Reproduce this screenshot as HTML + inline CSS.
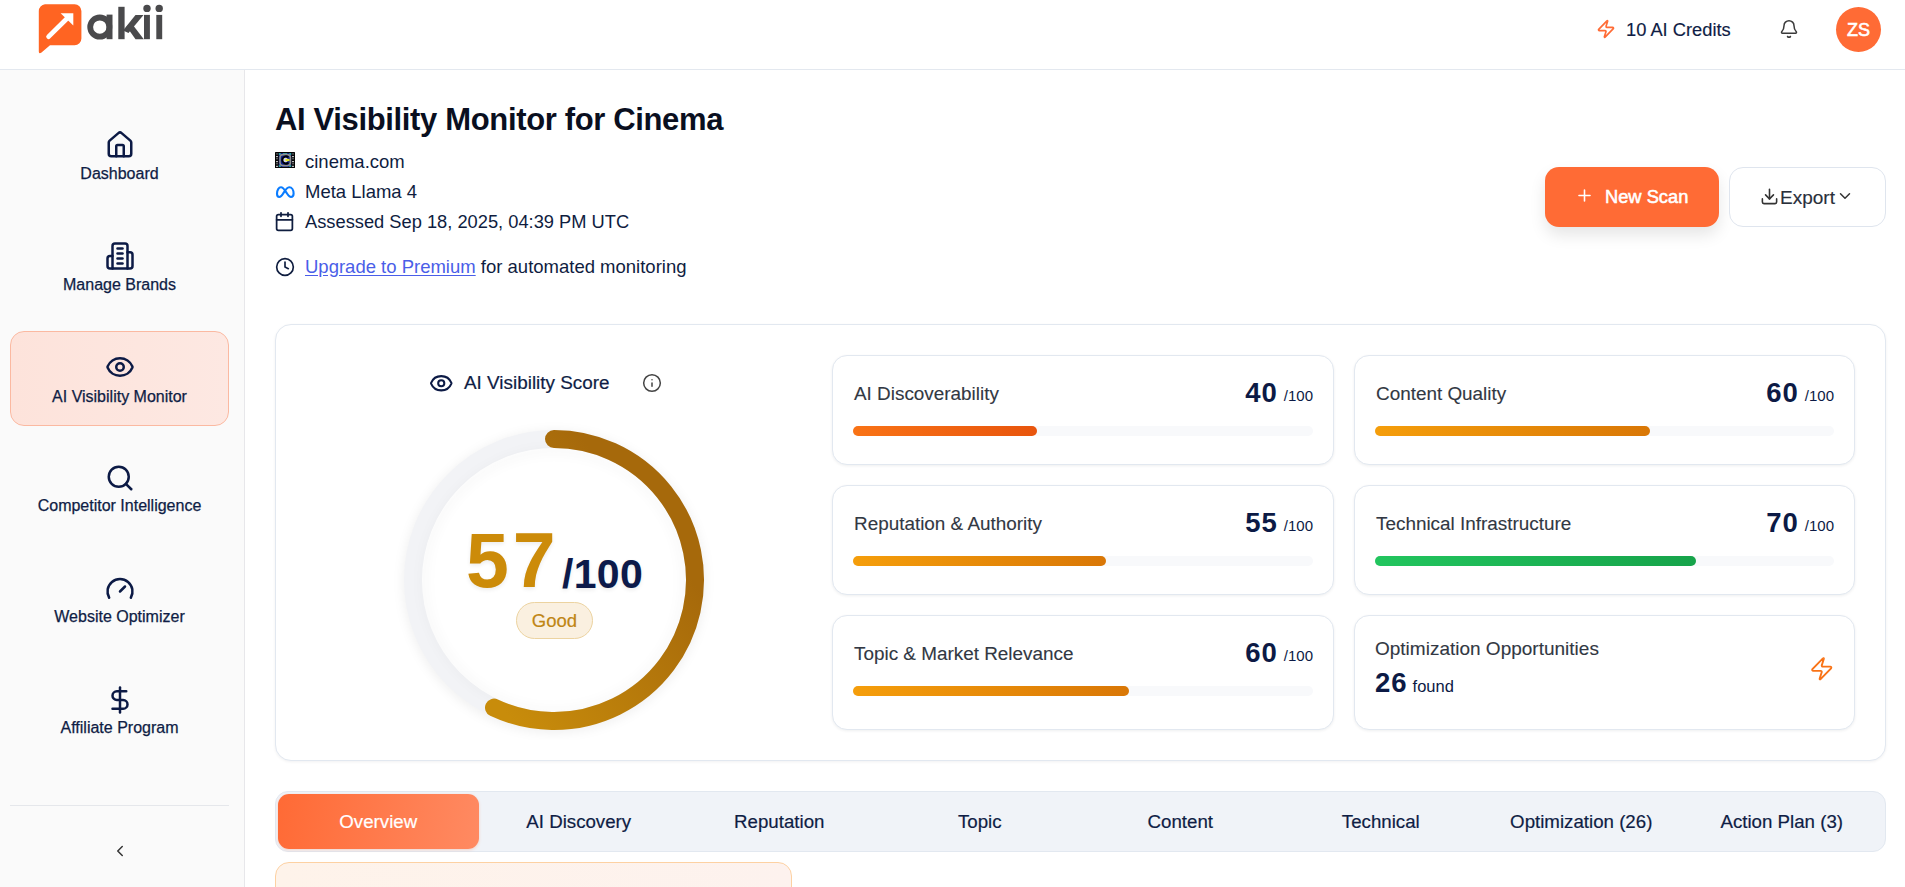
<!DOCTYPE html>
<html><head><meta charset="utf-8">
<style>
*{box-sizing:border-box;margin:0;padding:0}
html,body{width:1905px;height:887px;overflow:hidden;background:#fff;font-family:"Liberation Sans",sans-serif;color:#0f1d3f}
.abs{position:absolute}
#header{position:absolute;left:0;top:0;width:1905px;height:70px;background:#fff;border-bottom:1px solid #e3e8ef}
#sidebar{position:absolute;left:0;top:70px;width:245px;height:817px;background:#fafafa;border-right:1px solid #e7e7ea}
.nav{position:absolute;left:10px;width:219px;height:95px;text-align:center}
.nav svg{position:absolute;left:50%;transform:translateX(-50%)}
.nav .lbl{position:absolute;left:0;right:0;font-size:16px;color:#0f1d45;white-space:nowrap;-webkit-text-stroke:0.25px #0f1d45}
.nav.active{background:linear-gradient(90deg,#fde3db,#fde8e2);border:1px solid #fbb9a1;border-radius:14px}
.t{position:absolute;white-space:nowrap;line-height:1}
.card{position:absolute;background:#fff;border:1px solid #e2e8f0;border-radius:16px;box-shadow:0 1px 3px rgba(15,23,42,.06)}
.mc{position:absolute;background:#fff;border:1px solid #e2e8f0;border-radius:15px;box-shadow:0 1px 3px rgba(15,23,42,.07)}
.mlab{position:absolute;left:21px;font-size:18.9px;color:#323843;-webkit-text-stroke:0.12px #323843;white-space:nowrap;line-height:1}
.mnum{position:absolute;right:20px;white-space:nowrap;line-height:1;color:#0c1a45}
.mnum b{font-size:27.5px;font-weight:700;letter-spacing:1px}
.mnum span{font-size:15px;margin-left:6px;position:relative;top:-1px}
.track{position:absolute;left:20px;right:20px;height:10px;border-radius:5px;background:#f8f9fb}
.fill{position:absolute;left:0;top:0;height:10px;border-radius:5px}
.tab{position:absolute;top:0;height:55px;width:200.5px;text-align:center;font-size:18.7px;color:#0f1d45;line-height:55.5px;-webkit-text-stroke:0.2px currentColor}
</style></head>
<body>
<div id="header">
  <!-- logo -->
  <svg class="abs" style="left:37px;top:3px" width="46" height="52" viewBox="0 0 46 52">
    <path d="M8 1.2 H37.6 A6.8 6.8 0 0 1 44.4 8 V35.5 A6.8 6.8 0 0 1 37.6 42.3 H13 L4.5 49.5 Q1.8 51.5 1.8 48.5 V8 A6.8 6.8 0 0 1 8 1.2 Z" fill="#ff6422"/>
    <path d="M11.6 33.6 L30.5 15" stroke="#fff" stroke-width="4.8" stroke-linecap="round"/>
    <path d="M23.6 10.2 H36.3 V22.6 Z" fill="#fff"/>
  </svg>
  <svg class="abs" style="left:0;top:0" width="180" height="60" viewBox="0 0 180 60" fill="#4a4a4c">
    <circle cx="99.8" cy="27.1" r="9.6" fill="none" stroke="#4a4a4c" stroke-width="5.8"/>
    <rect x="106.6" y="14.6" width="5.9" height="24.6"/>
    <rect x="118.3" y="6.8" width="6.3" height="32.4"/>
    <path d="M123 30.5 L135.5 14.9 H143.5 L128.5 33 Z"/>
    <path d="M126.5 26.5 L131 22.5 L143.8 39.2 H135.5 Z"/>
    <rect x="144" y="14.9" width="5.9" height="24.3"/>
    <circle cx="147" cy="8.4" r="3.7"/>
    <rect x="156.3" y="14.9" width="5.9" height="24.3"/>
    <circle cx="159.2" cy="8.4" r="3.7"/>
  </svg>

  <svg class="abs" style="left:1596px;top:19px" width="20" height="20" viewBox="0 0 24 24" fill="none" stroke="#ff6b35" stroke-width="2" stroke-linejoin="round" stroke-linecap="round"><path d="M4 14a1 1 0 0 1-.78-1.63l9.9-10.2a.5.5 0 0 1 .86.46l-1.92 6.02A1 1 0 0 0 13 10h7a1 1 0 0 1 .78 1.63l-9.9 10.2a.5.5 0 0 1-.86-.46l1.92-6.02A1 1 0 0 0 11 14z"/></svg>
  <div class="t" style="left:1626px;top:21px;font-size:18.3px;color:#0f1d45;-webkit-text-stroke:0.15px #0f1d45">10 AI Credits</div>
  <svg class="abs" style="left:1779px;top:18.5px" width="20" height="20" viewBox="0 0 24 24" fill="none" stroke="#3b3b3b" stroke-width="1.8" stroke-linecap="round" stroke-linejoin="round"><path d="M10.268 21a2 2 0 0 0 3.464 0"/><path d="M3.262 15.326A1 1 0 0 0 4 17h16a1 1 0 0 0 .74-1.673C19.41 13.956 18 12.499 18 8A6 6 0 0 0 6 8c0 4.499-1.411 5.956-2.738 7.326"/></svg>
  <div class="abs" style="left:1836px;top:7px;width:45px;height:45px;border-radius:50%;background:#ff6b35;color:#fff;font-size:18px;font-weight:400;-webkit-text-stroke:0.6px #fff;text-align:center;line-height:46px">ZS</div>
</div>

<div id="sidebar">
  <div class="nav" style="top:38px">
    <svg style="top:22px" width="30" height="30" viewBox="0 0 24 24" fill="none" stroke="#0c1a45" stroke-width="2" stroke-linecap="round" stroke-linejoin="round"><path d="M15 21v-8a1 1 0 0 0-1-1h-4a1 1 0 0 0-1 1v8"/><path d="M3 10a2 2 0 0 1 .709-1.528l7-5.999a2 2 0 0 1 2.582 0l7 5.999A2 2 0 0 1 21 10v9a2 2 0 0 1-2 2H5a2 2 0 0 1-2-2z"/></svg>
    <div class="lbl" style="top:57px">Dashboard</div>
  </div>
  <div class="nav" style="top:149px">
    <svg style="top:22px" width="30" height="30" viewBox="0 0 24 24" fill="none" stroke="#0c1a45" stroke-width="2" stroke-linecap="round" stroke-linejoin="round"><path d="M6 22V4a2 2 0 0 1 2-2h8a2 2 0 0 1 2 2v18Z"/><path d="M6 12H4a2 2 0 0 0-2 2v6a2 2 0 0 0 2 2h2"/><path d="M18 9h2a2 2 0 0 1 2 2v9a2 2 0 0 1-2 2h-2"/><path d="M10 6h4"/><path d="M10 10h4"/><path d="M10 14h4"/><path d="M10 18h4"/></svg>
    <div class="lbl" style="top:57px">Manage Brands</div>
  </div>
  <div class="nav active" style="top:261px">
    <svg style="top:20px" width="30" height="30" viewBox="0 0 24 24" fill="none" stroke="#0c1a45" stroke-width="2" stroke-linecap="round" stroke-linejoin="round"><path d="M2.062 12.348a1 1 0 0 1 0-.696 10.75 10.75 0 0 1 19.876 0 1 1 0 0 1 0 .696 10.75 10.75 0 0 1-19.876 0"/><circle cx="12" cy="12" r="3"/></svg>
    <div class="lbl" style="top:56px">AI Visibility Monitor</div>
  </div>
  <div class="nav" style="top:371px">
    <svg style="top:21.5px" width="30" height="30" viewBox="0 0 24 24" fill="none" stroke="#0c1a45" stroke-width="2" stroke-linecap="round" stroke-linejoin="round"><circle cx="11" cy="11" r="8"/><path d="m21 21-4.3-4.3"/></svg>
    <div class="lbl" style="top:56px">Competitor Intelligence</div>
  </div>
  <div class="nav" style="top:482px">
    <svg style="top:21.5px" width="30" height="30" viewBox="0 0 24 24" fill="none" stroke="#0c1a45" stroke-width="2" stroke-linecap="round" stroke-linejoin="round"><path d="m12 14 4-4"/><path d="M3.34 19a10 10 0 1 1 17.32 0"/></svg>
    <div class="lbl" style="top:56px">Website Optimizer</div>
  </div>
  <div class="nav" style="top:593px">
    <svg style="top:21.5px" width="30" height="30" viewBox="0 0 24 24" fill="none" stroke="#0c1a45" stroke-width="2" stroke-linecap="round" stroke-linejoin="round"><line x1="12" x2="12" y1="2" y2="22"/><path d="M17 5H9.5a3.5 3.5 0 0 0 0 7h5a3.5 3.5 0 0 1 0 7H6"/></svg>
    <div class="lbl" style="top:56px">Affiliate Program</div>
  </div>
  <div class="abs" style="left:10px;top:735px;width:219px;height:1px;background:#e5e7eb"></div>
  <svg class="abs" style="left:111px;top:772px" width="18" height="18" viewBox="0 0 24 24" fill="none" stroke="#333" stroke-width="2" stroke-linecap="round" stroke-linejoin="round"><path d="m15 18-6-6 6-6"/></svg>
</div>

<div id="main">
  <div class="t" style="left:275px;top:104px;font-size:31px;font-weight:700;color:#0a0f1f;letter-spacing:-0.35px">AI Visibility Monitor for Cinema</div>
  <svg class="abs" style="left:275px;top:152px" width="20" height="16" viewBox="0 0 20 16">
    <rect x="0" y="0" width="20" height="16" rx="0.5" fill="#050505"/>
    <rect x="3.8" y="1" width="12.4" height="14" fill="#0b1d8a"/>
    <g fill="#2a9a9a"><rect x="3.8" y="1" width="2" height="2"/><rect x="14.2" y="1" width="2" height="2"/><rect x="3.8" y="13" width="2" height="2"/><rect x="14.2" y="13" width="2" height="2"/><rect x="8" y="1" width="4" height="1.3"/></g>
    <rect x="5" y="2.6" width="10.4" height="11" rx="3" fill="none" stroke="#8e8e8e" stroke-width="1.6"/>
    <path d="M13.3 5.2 A3.6 3.6 0 1 0 13.3 10.8" fill="none" stroke="#000" stroke-width="1.8"/>
    <circle cx="10.6" cy="8" r="2.2" fill="#d8d8e0"/>
    <rect x="10.5" y="6.9" width="4" height="2.2" fill="#e8e820"/>
    <g fill="#b8b8b8"><rect x="1" y="1.2" width="2" height="1.4" fill="#555"/><rect x="1" y="4" width="2" height="1.2"/><rect x="1" y="6" width="2" height="1.4" fill="#555"/><rect x="1" y="9" width="2" height="1.2"/><rect x="1" y="11" width="2" height="1.4" fill="#555"/><rect x="1" y="13.8" width="2" height="1.2"/>
    <rect x="17" y="1.2" width="2" height="1.4" fill="#555"/><rect x="17" y="4" width="2" height="1.2"/><rect x="17" y="6" width="2" height="1.4" fill="#555"/><rect x="17" y="9" width="2" height="1.2"/><rect x="17" y="11" width="2" height="1.4" fill="#555"/><rect x="17" y="13.8" width="2" height="1.2"/></g>
  </svg>
  <div class="t" style="left:305px;top:153px;font-size:18.5px;color:#0f1d3f">cinema.com</div>
  <svg class="abs" style="left:275px;top:183.5px" width="20" height="16" viewBox="0 0 20 16" fill="none" stroke="#0a7cff" stroke-width="2.1" stroke-linecap="round" stroke-linejoin="round"><path d="M2 9.8 C2 6 3.8 3.2 6 3.2 C8.3 3.2 10 6.5 12 9.5 C13.5 11.8 14.6 13 16 13 C17.6 13 18.6 11.6 18.6 9.6 C18.6 6 16.8 3.2 14.2 3.2 C11.8 3.2 10 6.5 8.2 9.5 C6.8 11.8 5.8 13 4.3 13 C2.8 13 2 11.8 2 9.8 Z"/></svg>
  <div class="t" style="left:305px;top:182.5px;font-size:18.5px;color:#0f1d3f">Meta Llama 4</div>
  <svg class="abs" style="left:274px;top:211px" width="21" height="21" viewBox="0 0 24 24" fill="none" stroke="#0f1d3f" stroke-width="2" stroke-linecap="round" stroke-linejoin="round"><path d="M8 2v4"/><path d="M16 2v4"/><rect width="18" height="18" x="3" y="4" rx="2"/><path d="M3 10h18"/></svg>
  <div class="t" style="left:305px;top:213px;font-size:18.3px;color:#0f1d3f">Assessed Sep 18, 2025, 04:39 PM UTC</div>
  <svg class="abs" style="left:274.5px;top:257px" width="20" height="20" viewBox="0 0 24 24" fill="none" stroke="#0f1d3f" stroke-width="2" stroke-linecap="round" stroke-linejoin="round"><circle cx="12" cy="12" r="10"/><polyline points="12 6 12 12 16 14"/></svg>
  <div class="t" style="left:305px;top:258px;font-size:18.5px;color:#0f1d3f"><span style="color:#4a5ee8;text-decoration:underline;text-underline-offset:1.5px">Upgrade to Premium</span> for automated monitoring</div>

  <div class="abs" style="left:1545px;top:167px;width:174px;height:60px;border-radius:14px;background:#ff6b35;box-shadow:0 8px 16px rgba(0,0,0,.10)"></div>
  <svg class="abs" style="left:1575px;top:186px" width="19" height="19" viewBox="0 0 24 24" fill="none" stroke="#fff" stroke-width="2" stroke-linecap="round"><path d="M5 12h14"/><path d="M12 5v14"/></svg>
  <div class="t" style="left:1605px;top:188px;font-size:18.3px;font-weight:400;color:#fff;-webkit-text-stroke:0.55px #fff">New Scan</div>
  <div class="abs" style="left:1729px;top:167px;width:157px;height:60px;border-radius:14px;background:#fff;border:1px solid #dfe5ee"></div>
  <svg class="abs" style="left:1760px;top:187px" width="19" height="19" viewBox="0 0 24 24" fill="none" stroke="#333" stroke-width="2" stroke-linecap="round" stroke-linejoin="round"><path d="M21 15v4a2 2 0 0 1-2 2H5a2 2 0 0 1-2-2v-4"/><polyline points="7 10 12 15 17 10"/><line x1="12" x2="12" y1="15" y2="3"/></svg>
  <div class="t" style="left:1780px;top:187.5px;font-size:19px;color:#2a2f3a;-webkit-text-stroke:0.15px #2a2f3a">Export</div>
  <svg class="abs" style="left:1836px;top:187px" width="18" height="18" viewBox="0 0 24 24" fill="none" stroke="#333" stroke-width="2" stroke-linecap="round" stroke-linejoin="round"><path d="m6 9 6 6 6-6"/></svg>
  <div class="card" style="left:275px;top:324px;width:1611px;height:437px"></div>
  <svg class="abs" style="left:429px;top:371px" width="24.5" height="24.5" viewBox="0 0 24 24" fill="none" stroke="#0c1a45" stroke-width="2" stroke-linecap="round" stroke-linejoin="round"><path d="M2.062 12.348a1 1 0 0 1 0-.696 10.75 10.75 0 0 1 19.876 0 1 1 0 0 1 0 .696 10.75 10.75 0 0 1-19.876 0"/><circle cx="12" cy="12" r="3"/></svg>
  <div class="t" style="left:464px;top:374px;font-size:18.9px;color:#0f1d45;-webkit-text-stroke:0.2px #0f1d45">AI Visibility Score</div>
  <svg class="abs" style="left:642px;top:372.5px" width="20" height="20" viewBox="0 0 24 24" fill="none" stroke="#444" stroke-width="1.8" stroke-linecap="round" stroke-linejoin="round"><circle cx="12" cy="12" r="10"/><path d="M12 16v-4"/><path d="M12 8h.01"/></svg>

  <svg class="abs" style="left:394px;top:420px" width="320" height="320" viewBox="0 0 320 320">
    <defs>
      <linearGradient id="arc" gradientUnits="userSpaceOnUse" x1="110" y1="290" x2="290" y2="150">
        <stop offset="0" stop-color="#c88c0b"/>
        <stop offset="1" stop-color="#a6690b"/>
      </linearGradient>
      <filter id="sh" x="-20%" y="-20%" width="140%" height="140%"><feGaussianBlur stdDeviation="5"/></filter>
    </defs>
    <circle cx="160" cy="162" r="141" fill="none" stroke="rgba(0,0,0,0.05)" stroke-width="22" filter="url(#sh)"/>
    <circle cx="160" cy="160" r="141" fill="#fff" stroke="#f2f3f6" stroke-width="18"/>
    <circle cx="160" cy="161" r="130" fill="none" stroke="rgba(0,0,0,0.025)" stroke-width="8" filter="url(#sh)"/>
    <path d="M160 19 A141 141 0 1 1 100 287.6" fill="none" stroke="url(#arc)" stroke-width="18" stroke-linecap="round"/>
  </svg>
  <div class="t" style="left:466px;top:522px;font-size:77px;font-weight:700;color:#cc8b09;letter-spacing:4px;text-shadow:0 2px 4px rgba(0,0,0,.08)">57</div>
  <div class="t" style="left:562px;top:554px;font-size:41px;font-weight:700;color:#0c1a4a;letter-spacing:0.3px;text-shadow:0 2px 4px rgba(0,0,0,.08)">/100</div>
  <div class="abs" style="left:516px;top:602px;width:77px;height:37px;border-radius:19px;background:#faf0e0;border:1px solid #ecd3a0"></div>
  <div class="t" style="left:516px;top:612px;width:77px;text-align:center;font-size:18.5px;color:#c08614;-webkit-text-stroke:0.2px #c08614">Good</div>

  <div class="mc" style="left:832px;top:355px;width:502px;height:110px">
    <div class="mlab" style="top:29px">AI Discoverability</div>
    <div class="mnum" style="top:22.5px"><b>40</b><span>/100</span></div>
    <div class="track" style="top:70px"><div class="fill" style="width:40%;background:linear-gradient(90deg,#f97316,#e8550d)"></div></div>
  </div>
  <div class="mc" style="left:1354px;top:355px;width:501px;height:110px">
    <div class="mlab" style="top:29px">Content Quality</div>
    <div class="mnum" style="top:22.5px"><b>60</b><span>/100</span></div>
    <div class="track" style="top:70px"><div class="fill" style="width:60%;background:linear-gradient(90deg,#f59e0b,#d97706)"></div></div>
  </div>
  <div class="mc" style="left:832px;top:485px;width:502px;height:110px">
    <div class="mlab" style="top:29px">Reputation &amp; Authority</div>
    <div class="mnum" style="top:22.5px"><b>55</b><span>/100</span></div>
    <div class="track" style="top:70px"><div class="fill" style="width:55%;background:linear-gradient(90deg,#f59e0b,#d97706)"></div></div>
  </div>
  <div class="mc" style="left:1354px;top:485px;width:501px;height:110px">
    <div class="mlab" style="top:29px">Technical Infrastructure</div>
    <div class="mnum" style="top:22.5px"><b>70</b><span>/100</span></div>
    <div class="track" style="top:70px"><div class="fill" style="width:70%;background:linear-gradient(90deg,#22c55e,#16a34a)"></div></div>
  </div>
  <div class="mc" style="left:832px;top:615px;width:502px;height:115px">
    <div class="mlab" style="top:29px">Topic &amp; Market Relevance</div>
    <div class="mnum" style="top:22.5px"><b>60</b><span>/100</span></div>
    <div class="track" style="top:70px"><div class="fill" style="width:60%;background:linear-gradient(90deg,#f59e0b,#d97706)"></div></div>
  </div>
  <div class="mc" style="left:1354px;top:615px;width:501px;height:115px">
    <div class="mlab" style="top:23px;left:20px;font-size:19px">Optimization Opportunities</div>
    <div class="t" style="left:20px;top:53px;color:#0c1a45"><b style="font-size:27.5px;letter-spacing:1px">26</b><span style="font-size:16.5px;margin-left:5px">found</span></div>
    <svg class="abs" style="left:454px;top:40px" width="25.5" height="25.5" viewBox="0 0 24 24" fill="none" stroke="#f97316" stroke-width="1.8" stroke-linejoin="round" stroke-linecap="round"><path d="M4 14a1 1 0 0 1-.78-1.63l9.9-10.2a.5.5 0 0 1 .86.46l-1.92 6.02A1 1 0 0 0 13 10h7a1 1 0 0 1 .78 1.63l-9.9 10.2a.5.5 0 0 1-.86-.46l1.92-6.02A1 1 0 0 0 11 14z"/></svg>
  </div>

  <div class="abs" style="left:275px;top:791px;width:1611px;height:61px;border-radius:13px;background:#f0f3f8;border:1px solid #e2e8f0">
    <div class="abs" style="left:2px;top:2px;width:201px;height:55px;border-radius:11px;background:linear-gradient(100deg,#ff6a35,#ff8a62);box-shadow:0 1px 3px rgba(255,107,53,.25)"></div>
    <div class="tab" style="left:2.0px;top:2px;color:#fff">Overview</div>
    <div class="tab" style="left:202.5px;top:2px;color:#0f1d45">AI Discovery</div>
    <div class="tab" style="left:403.0px;top:2px;color:#0f1d45">Reputation</div>
    <div class="tab" style="left:603.5px;top:2px;color:#0f1d45">Topic</div>
    <div class="tab" style="left:804.0px;top:2px;color:#0f1d45">Content</div>
    <div class="tab" style="left:1004.5px;top:2px;color:#0f1d45">Technical</div>
    <div class="tab" style="left:1205.0px;top:2px;color:#0f1d45">Optimization (26)</div>
    <div class="tab" style="left:1405.5px;top:2px;color:#0f1d45">Action Plan (3)</div>
  </div>
  <div class="abs" style="left:275px;top:862px;width:517px;height:60px;border-radius:14px;background:linear-gradient(90deg,#fef3ea,#fdf2ee);border:1px solid #fdd1a2"></div>
</div>
</body></html>
